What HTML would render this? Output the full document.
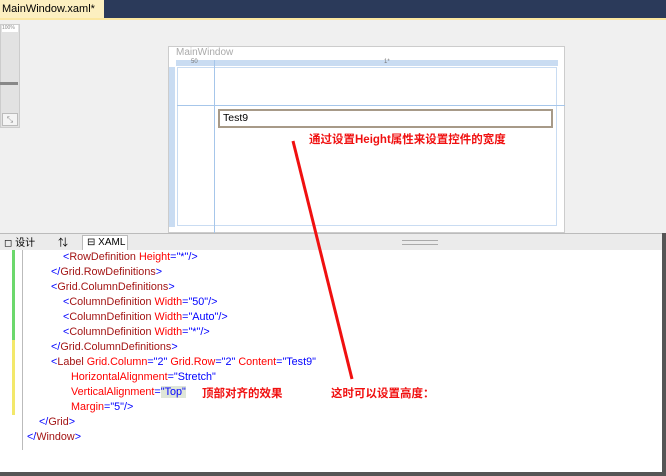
<!DOCTYPE html>
<html><head><meta charset="utf-8"><style>
body{margin:0;width:666px;height:476px;overflow:hidden;background:#fff;font-family:"Liberation Sans","Noto Sans CJK SC",sans-serif;position:relative}
.a{position:absolute}
.code{position:absolute;font-size:10.8px;color:#a31515;white-space:pre;line-height:15px}
.b{color:#0000ff}.r{color:#ff0000}
.ann{position:absolute;color:#f01010;font-weight:bold;font-size:11.5px;white-space:nowrap}
</style></head><body>
<div class="a" style="left:0;top:0;width:666px;height:18px;background:#2b3a5a"></div>
<div class="a" style="left:0;top:0;width:104px;height:19px;background:#fcefc0;font-size:11px;line-height:18px;color:#000;padding-left:2px;box-sizing:border-box">MainWindow.xaml* <span style="color:#555;margin-left:4px">✕</span></div>
<div class="a" style="left:0;top:18px;width:666px;height:2px;background:#fbe7a1"></div>
<div class="a" style="left:0;top:20px;width:666px;height:213px;background:#f0f0f0"></div>
<div class="a" style="left:0;top:24px;width:20px;height:104px;background:#e2e2e2;border:1px solid #ccc;box-sizing:border-box"></div>
<div class="a" style="left:2px;top:25px;width:16px;height:7px;background:#fff;font-size:5px;color:#888">100%</div>
<div class="a" style="left:0;top:82px;width:18px;height:3px;background:#888"></div>
<div class="a" style="left:2px;top:113px;width:16px;height:13px;background:#f4f4f4;border:1px solid #bbb;box-sizing:border-box;font-size:8px;color:#888;text-align:center;line-height:11px">⤡</div>
<div class="a" style="left:168px;top:46px;width:397px;height:187px;background:#fff;border:1px solid #ccc;box-sizing:border-box"></div>
<div class="a" style="left:176px;top:47px;font-size:10px;color:#aaa">MainWindow</div>
<div class="a" style="left:176px;top:60px;width:382px;height:6px;background:#c9dcf2"></div>
<div class="a" style="left:191px;top:59px;font-size:6px;color:#777">50</div>
<div class="a" style="left:384px;top:59px;font-size:6px;color:#777">1*</div>
<div class="a" style="left:169px;top:67px;width:6px;height:160px;background:#c9dcf2"></div>
<div class="a" style="left:177px;top:67px;width:380px;height:159px;border:1px solid #c9dcf2;box-sizing:border-box"></div>
<div class="a" style="left:214px;top:60px;width:1px;height:173px;background:#a6c6ea"></div>
<div class="a" style="left:177px;top:105px;width:388px;height:1px;background:#a6c6ea"></div>
<div class="a" style="left:218px;top:109px;width:335px;height:19px;border:2px solid #a79a88;box-sizing:border-box;background:#fff;font-size:10.5px;line-height:15px;padding-left:3px">Test9</div>
<div class="ann" style="left:309px;top:131px">通过设置Height属性来设置控件的宽度</div>
<div class="a" style="left:0;top:233px;width:666px;height:17px;background:#ebebeb;border-top:1px solid #bbb;box-sizing:border-box"></div>
<div class="a" style="left:4px;top:234px;font-size:10px">◻ 设计</div>
<div class="a" style="left:58px;top:234px;font-size:10px">⇅</div>
<div class="a" style="left:82px;top:235px;width:46px;height:15px;background:#fff;border:1px solid #bbb;border-bottom:none;font-size:10px;line-height:14px;padding-left:4px;box-sizing:border-box">⊟ XAML</div>
<div class="a" style="left:402px;top:240px;width:36px;height:3px;border-top:1px solid #aaa;border-bottom:1px solid #aaa"></div>
<div class="a" style="left:12px;top:250px;width:3px;height:90px;background:#6cd86c"></div>
<div class="a" style="left:12px;top:340px;width:3px;height:75px;background:#f3e86a"></div>
<div class="a" style="left:22px;top:250px;width:1px;height:200px;background:#bbb"></div>
<div class="code" style="left:63px;top:250px"><span class="b">&lt;</span>RowDefinition <span class="r">Height</span><span class="b">="*"/&gt;</span></div>
<div class="code" style="left:51px;top:265px"><span class="b">&lt;/</span>Grid.RowDefinitions<span class="b">&gt;</span></div>
<div class="code" style="left:51px;top:280px"><span class="b">&lt;</span>Grid.ColumnDefinitions<span class="b">&gt;</span></div>
<div class="code" style="left:63px;top:295px"><span class="b">&lt;</span>ColumnDefinition <span class="r">Width</span><span class="b">="50"/&gt;</span></div>
<div class="code" style="left:63px;top:310px"><span class="b">&lt;</span>ColumnDefinition <span class="r">Width</span><span class="b">="Auto"/&gt;</span></div>
<div class="code" style="left:63px;top:325px"><span class="b">&lt;</span>ColumnDefinition <span class="r">Width</span><span class="b">="*"/&gt;</span></div>
<div class="code" style="left:51px;top:340px"><span class="b">&lt;/</span>Grid.ColumnDefinitions<span class="b">&gt;</span></div>
<div class="code" style="left:51px;top:355px"><span class="b">&lt;</span>Label <span class="r">Grid.Column</span><span class="b">="2"</span> <span class="r">Grid.Row</span><span class="b">="2"</span> <span class="r">Content</span><span class="b">="Test9"</span></div>
<div class="code" style="left:71px;top:370px"><span class="r">HorizontalAlignment</span><span class="b">="Stretch"</span></div>
<div class="code" style="left:71px;top:385px"><span class="r">VerticalAlignment</span><span class="b">=<span style="background:#dfe6d8">"Top"</span></span></div>
<div class="code" style="left:71px;top:400px"><span class="r">Margin</span><span class="b">="5"/&gt;</span></div>
<div class="code" style="left:39px;top:415px"><span class="b">&lt;/</span>Grid<span class="b">&gt;</span></div>
<div class="code" style="left:27px;top:430px"><span class="b">&lt;/</span>Window<span class="b">&gt;</span></div>
<div class="ann" style="left:202px;top:385px">顶部对齐的效果</div>
<div class="ann" style="left:331px;top:385px">这时可以设置高度：</div>
<svg class="a" style="left:0;top:0" width="666" height="476"><line x1="293" y1="141" x2="352" y2="379" stroke="#f01010" stroke-width="3"/></svg>
<div class="a" style="left:0;top:472px;width:666px;height:4px;background:#555"></div>
<div class="a" style="left:662px;top:233px;width:4px;height:243px;background:#555"></div>
</body></html>
